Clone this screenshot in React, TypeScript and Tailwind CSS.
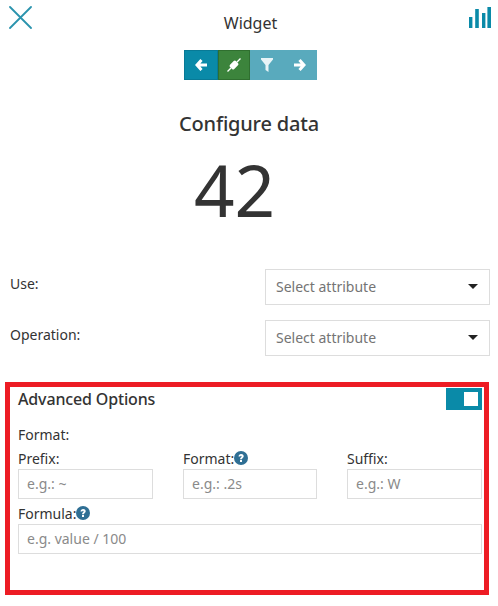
import React from "react";

const Caret = () => (
  <svg width="10" height="5" viewBox="0 0 10 5" className="block">
    <path d="M0 0H10L5 5Z" fill="#222" />
  </svg>
);

const Help = () => (
  <svg width="14" height="14" viewBox="0 0 14 14" className="block">
    <circle cx="7" cy="7" r="7" fill="#2f6f94" />
    <path d="M4.5 5.4C4.6 3.9 5.7 3 7.1 3C8.6 3 9.7 3.9 9.7 5.2C9.7 6.8 8 6.8 8 8.2H6C6 6.2 7.6 6.2 7.6 5.4C7.6 5 7.4 4.8 7 4.8C6.6 4.8 6.4 5.1 6.3 5.6Z" fill="#fff" />
    <rect x="6" y="9" width="2" height="2" fill="#fff" />
  </svg>
);

const Select = () => (
  <div className="flex h-[36px] w-[225px] items-center justify-between border border-[#dddddd] pb-px pl-[10px] pr-[11px] text-[14px] text-[#747474]">
    <span>Select attribute</span>
    <Caret />
  </div>
);

const Field = ({ label, help, placeholder, className }: { label: string; help?: boolean; placeholder: string; className: string }) => (
  <div className={className}>
    <div className="flex h-[22px] items-center text-[14px] text-[#333333]">
      {label}
      {help && <Help />}
    </div>
    <div className="flex h-[30px] items-center border border-[#dddddd] pb-px pl-[8px] text-[14px] text-[#8a8a8a]">{placeholder}</div>
  </div>
);

export default function App() {
  return (
    <div className="h-[606px] w-[498px] overflow-hidden bg-white text-[#333333]" style={{ fontFamily: '"Noto Sans", "Open Sans", sans-serif' }}>
      <header className="flex h-[50px] items-start justify-between pl-[9px] pr-[7px] pt-[6px]">
        <svg width="23" height="23" viewBox="0 0 23 23" className="block">
          <path d="M1 1L22 22M22 1L1 22" stroke="#2a93ad" strokeWidth="1.8" strokeLinecap="round" />
        </svg>
        <div className="pt-[5px] text-[16px] leading-[24px]">Widget</div>
        <svg width="22" height="23" viewBox="0 0 22 23" className="block">
          <rect x="0" y="11" width="3.4" height="11" fill="#0a8aa8" />
          <rect x="6.2" y="3" width="3.6" height="19" fill="#0a8aa8" />
          <rect x="13" y="7" width="3.4" height="15" fill="#0a8aa8" />
          <rect x="18.4" y="1" width="3.6" height="21" fill="#0a8aa8" />
        </svg>
      </header>

      <div className="flex justify-center">
        <div className="ml-[2px] flex h-[30px]">
          <div className="flex w-[34px] items-center justify-center border border-[#087a96] bg-[#0a8aa8]">
            <svg width="12" height="12" viewBox="0 0 12 12"><path d="M6.5 1L2 6L6.5 11M2.5 6H12" fill="none" stroke="#fff" strokeWidth="3" /></svg>
          </div>
          <div className="flex w-[32px] items-center justify-center border border-[#2f6f2f] bg-[#3c843c]">
            <svg width="14" height="14" viewBox="0 0 14 14">
              <path d="M0.5 13.5L4 10M10 4L13.5 0.5" stroke="#fff" strokeWidth="1.4" />
              <rect x="2.8" y="4" width="8.4" height="6" rx="1.6" transform="rotate(-45 7 7)" fill="#fff" />
            </svg>
          </div>
          <div className="flex w-[34px] items-center justify-center bg-[#59aabd]">
            <svg width="12" height="14" viewBox="0 0 12 14"><path d="M0 0H12V1.6L7.5 7V14L4.5 12V7L0 1.6Z" fill="#e8f4f7" /></svg>
          </div>
          <div className="flex w-[33px] items-center justify-center bg-[#59aabd]">
            <svg width="12" height="12" viewBox="0 0 12 12"><path d="M5.5 1L10 6L5.5 11M9.5 6H0" fill="none" stroke="#fff" strokeWidth="3" /></svg>
          </div>
        </div>
      </div>

      <h1 className="mt-[28px] text-center text-[20px] font-medium leading-[32px] tracking-[-0.2px]">Configure data</h1>
      <div className="mt-[1px] pr-[29px] text-center text-[71px] leading-[97px]">42</div>

      <div className="mt-[31px] flex h-[36px] items-start justify-between pl-[10px] pr-[8px]">
        <span className="mt-[5px] text-[14px] leading-[20px]">Use:</span>
        <Select />
      </div>
      <div className="mt-[15px] flex h-[36px] items-start justify-between pl-[10px] pr-[8px]">
        <span className="mt-[5px] text-[14px] leading-[20px]">Operation:</span>
        <Select />
      </div>

      <section className="ml-[5px] mt-[26px] h-[213px] w-[484px] border-[5px] border-[#ed1c24] pl-[8px] pr-[2px] pt-px">
        <div className="flex items-start justify-between">
          <span className="text-[16px] font-medium leading-[22px] tracking-[-0.15px]">Advanced Options</span>
          <div className="flex h-[22px] w-[36px] items-center justify-end bg-[#0a8aa8] pr-[4px]">
            <div className="h-[14px] w-[14px] bg-white" />
          </div>
        </div>
        <div className="mt-[15px] text-[14px] leading-[20px]">Format:</div>
        <div className="mt-[2px] flex justify-between">
          <Field label="Prefix:" placeholder="e.g.: ~" className="w-[135px]" />
          <Field label="Format:" help placeholder="e.g.: .2s" className="w-[134px]" />
          <Field label="Suffix:" placeholder="e.g.: W" className="w-[135px]" />
        </div>
        <div className="mt-[3px]">
          <Field label="Formula:" help placeholder="e.g. value / 100" className="w-full" />
        </div>
      </section>
    </div>
  );
}
